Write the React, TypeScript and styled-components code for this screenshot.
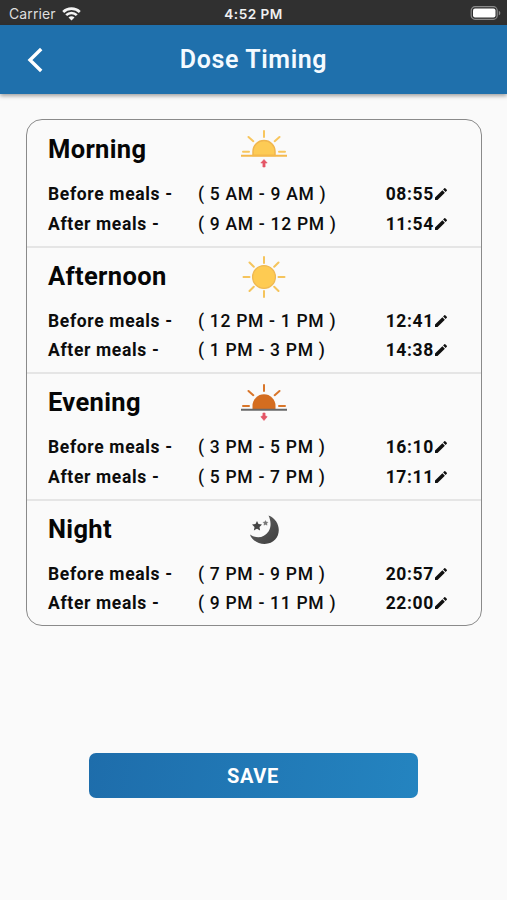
import React from "react";
import styled, { createGlobalStyle } from "styled-components";

const Global = createGlobalStyle`
  * { box-sizing: border-box; }
  body { margin: 0; background: #fafafa; font-family: Roboto, sans-serif; color: #0c0c0c; }
`;

const Screen = styled.div`
  height: 900px;
  display: flex;
  flex-direction: column;
  background: #fafafa;
`;

const StatusBar = styled.div`
  height: 25px;
  flex: none;
  display: grid;
  grid-template-columns: 1fr auto 1fr;
  align-items: center;
  padding: 2px 6px 0 9px;
  background: #303030;
  color: #f0f0f0;
  font: 400 14px/20px Inter, sans-serif;
`;

const Carrier = styled.div`
  display: flex;
  align-items: center;
  gap: 6px;
  color: #dedede;
  letter-spacing: 0.1px;
`;

const Clock = styled.div`
  margin-right: 3px;
  font-weight: 600;
  font-size: 13.6px;
  letter-spacing: 0.45px;
`;

const BatterySlot = styled.div`
  display: flex;
  justify-content: flex-end;
`;

const AppBar = styled.header`
  height: 69px;
  flex: none;
  display: grid;
  grid-template-columns: 70px 1fr 70px;
  align-items: center;
  background: #1f70ac;
  box-shadow: 0 2px 4px rgba(0, 0, 0, 0.36);
`;

const BackButton = styled.button`
  border: 0;
  padding: 0;
  background: none;
  display: grid;
  place-items: center;
`;

const Title = styled.h1`
  margin: 0;
  text-align: center;
  color: #f4faff;
  font-size: 25px;
  font-weight: 600;
  letter-spacing: 0.62px;
`;

const Card = styled.main`
  margin: 25px 25px 0 26px;
  height: 507px;
  flex: none;
  display: grid;
  grid-template-rows: 125.5px 126.5px 126.5px 1fr;
  border: 1.4px solid #8a8a8a;
  border-radius: 16px;
`;

const Section = styled.section`
  padding: 14px 33px 0 21px;
  & + & { border-top: 2px solid #e5e5e5; padding-top: 13px; }
`;

const SectionHead = styled.div`
  height: 45px;
  display: grid;
  grid-template-columns: 192px 48px;
  align-items: start;
`;

const Heading = styled.h2`
  margin: 0;
  font-size: 25.5px;
  line-height: 31px;
  font-weight: 700;
  letter-spacing: 0.35px;
  color: #060606;
`;

const IconBox = styled.div`
  height: 42px;
  margin-top: -5px;
  svg { display: block; }
`;

const Row = styled.div`
  height: 29.8px;
  display: grid;
  grid-template-columns: 150px 1fr auto;
  align-items: center;
  font-size: 17.5px;
  line-height: 30px;
  white-space: pre;
`;

const Meal = styled.span`
  font-weight: 700;
  letter-spacing: 0.65px;
`;

const Range = styled.span`
  font-weight: 500;
  letter-spacing: 0.7px;
`;

const Time = styled.span`
  display: flex;
  align-items: center;
  font-weight: 700;
  letter-spacing: 0.65px;
`;

const SaveButton = styled.button`
  width: 329px;
  height: 45px;
  margin: 127px 0 0 89.4px;
  padding: 0 2px 0 0;
  border: 0;
  border-radius: 7px;
  background: linear-gradient(100deg, #1e6dab, #2484c0);
  color: #fff;
  font: 700 20px Roboto, sans-serif;
  letter-spacing: 0.6px;
`;

const Wifi = () => (
  <svg width="19" height="14" viewBox="0 0 19 14" fill="none" stroke="#f4f4f4" strokeWidth="2.6">
    <path d="M1.2 5C5.700.5 13.300.5 17.800 5" />
    <path d="M4.200 8.200c2.900-2.900 7.700-2.900 10.600 0" />
    <path d="M6.500 10.500c1.700-1.700 4.300-1.700 6 0L9.500 13.500Z" fill="#f4f4f4" stroke="none" />
  </svg>
);

const Battery = () => (
  <svg width="31" height="15" viewBox="0 0 31 15">
    <rect x="1.2" y="0.700" width="26" height="12.600" rx="3.800" fill="none" stroke="#8a8a8a" strokeWidth="1.2" />
    <rect x="3" y="2.500" width="22.500" height="9" rx="2" fill="#fff" />
    <path d="M28.800 4.700c2 .8 2 3.800 0 4.600Z" fill="#8a8a8a" />
  </svg>
);

const Back = () => (
  <svg width="16" height="26" viewBox="0 0 16 26" fill="none" stroke="#fff" strokeWidth="3.4">
    <path d="M14.200 2 3 13l11.200 11" />
  </svg>
);

const Pencil = () => (
  <svg width="14" height="16" viewBox="1.5 0 21 24" fill="#111">
    <path d="M3 17.25V21h3.75L17.81 9.94l-3.75-3.75L3 17.25zM20.71 7.04a1 1 0 0 0 0-1.41l-2.34-2.34a1 1 0 0 0-1.41 0l-1.83 1.83 3.75 3.75 1.83-1.83z" />
  </svg>
);

const Sunrise = () => (
  <svg width="48" height="42" viewBox="0 0 48 42">
    <path d="M24 2v6M8.500 8l4.800 4.200M39.500 8l-4.800 4.200M3 22.800h6M39 22.800h6" stroke="#f8c65e" strokeWidth="2" strokeLinecap="round" />
    <path d="M13 26.500v-4a11 11 0 0 1 22 0v4Z" fill="#fdcb55" stroke="#f0b64e" strokeWidth="1.500" />
    <path d="M1 26.700h46" stroke="#f5b94d" strokeWidth="2" />
    <path d="m24 30.500-3.200 3.500h2.100v4h2.200v-4h2.100Z" fill="#e45566" stroke="#e45566" strokeWidth=".6" />
  </svg>
);

const Sun = () => (
  <svg width="48" height="42" viewBox="0 0 48 42">
    <path d="M24 1v6M24 35v6M3.500 21h6M38.500 21h6M9.500 6.500l4.300 4.200M38.500 6.500l-4.300 4.200M9.500 35l4.300-4.200M38.500 35l-4.300-4.200" stroke="#f5c45c" strokeWidth="2" strokeLinecap="round" />
    <circle cx="24" cy="21" r="11.400" fill="#fecb52" stroke="#efb952" strokeWidth="1.300" />
  </svg>
);

const Sunset = () => (
  <svg width="48" height="42" viewBox="0 0 48 42">
    <path d="M24 3v6M8.500 9l4.800 4.200M39.500 9l-4.800 4.200M3 24h6M39 24h6" stroke="#d9762a" strokeWidth="2" strokeLinecap="round" />
    <path d="M12.500 27v-3.200a11.500 11.500 0 0 1 23 0V27Z" fill="#d46d20" />
    <path d="M1 27.700h46" stroke="#686868" strokeWidth="2" />
    <path d="m24 38.500-3.200-3.800 2.100-1V31h2.200v2.700l2.100 1Z" fill="#e45566" stroke="#e45566" strokeWidth=".6" />
  </svg>
);

const Moon = () => (
  <svg width="48" height="42" viewBox="0 0 48 42">
    <defs>
      <linearGradient id="moon" x2="1" y2="1">
        <stop stopColor="#666" />
        <stop offset="1" stopColor="#3d3d3d" />
      </linearGradient>
    </defs>
    <path d="M28.500 6.500C43.500 12 42 34.800 24.500 35c-6.500 0-13-4-14.500-9.500C16.500 30 24 29 28.500 22.500c3-4.500 2.500-11 0-16Z" fill="url(#moon)" />
    <path d="m17 12 1.500 3.100 3.500.5-2.500 2.400.6 3.400-3.100-1.600-3.100 1.600.6-3.400-2.500-2.400 3.500-.5Z" fill="#444" />
    <path d="m25.500 11.500.8 1.500 1.700.3-1.200 1.200.3 1.700-1.600-.8-1.600.8.3-1.700-1.200-1.200 1.700-.3Z" fill="#777" stroke="#777" strokeWidth=".4" />
  </svg>
);

type Slot = [label: string, range: string, time: string];

const sections: { name: string; Icon: React.FC; slots: Slot[] }[] = [
  { name: "Morning", Icon: Sunrise, slots: [["Before meals -", "( 5 AM - 9 AM )", "08:55"], ["After meals -", "( 9 AM - 12 PM )", "11:54"]] },
  { name: "Afternoon", Icon: Sun, slots: [["Before meals -", "( 12 PM - 1 PM )", "12:41"], ["After meals -", "( 1 PM - 3 PM )", "14:38"]] },
  { name: "Evening", Icon: Sunset, slots: [["Before meals -", "( 3 PM - 5 PM )", "16:10"], ["After meals -", "( 5 PM - 7 PM )", "17:11"]] },
  { name: "Night", Icon: Moon, slots: [["Before meals -", "( 7 PM - 9 PM )", "20:57"], ["After meals -", "( 9 PM - 11 PM )", "22:00"]] },
];

export default function App() {
  return (
    <Screen>
      <Global />
      <StatusBar>
        <Carrier>Carrier <Wifi /></Carrier>
        <Clock>4:52 PM</Clock>
        <BatterySlot><Battery /></BatterySlot>
      </StatusBar>
      <AppBar>
        <BackButton aria-label="Back"><Back /></BackButton>
        <Title>Dose Timing</Title>
      </AppBar>
      <Card>
        {sections.map(({ name, Icon, slots }) => (
          <Section key={name}>
            <SectionHead>
              <Heading>{name}</Heading>
              <IconBox><Icon /></IconBox>
            </SectionHead>
            {slots.map(([label, range, time]) => (
              <Row key={label}>
                <Meal>{label}</Meal>
                <Range>{range}</Range>
                <Time>{time}<Pencil /></Time>
              </Row>
            ))}
          </Section>
        ))}
      </Card>
      <SaveButton>SAVE</SaveButton>
    </Screen>
  );
}
